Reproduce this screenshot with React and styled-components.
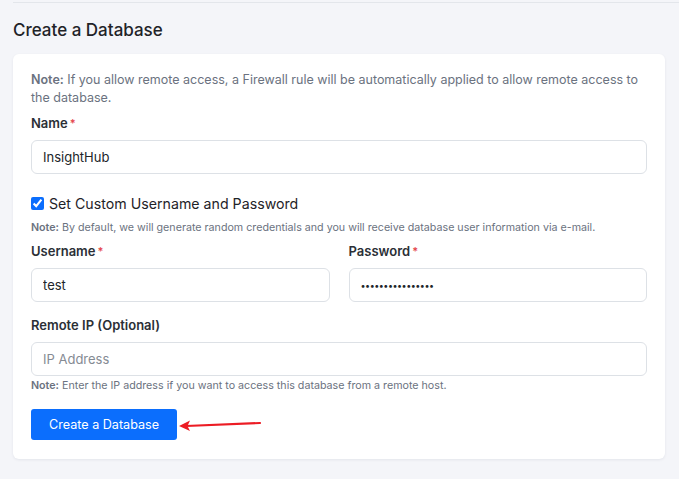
import React from 'react';
import styled, { createGlobalStyle } from 'styled-components';

const GlobalStyle = createGlobalStyle`
  html, body {
    margin: 0;
    padding: 0;
    background: #f4f5f9;
    font-family: Inter, "Noto Sans", sans-serif;
    color: #212529;
  }
`;

const Page = styled.div`
  padding-left: 13px;
  padding-top: 2px;
  min-height: 477px;
`;

const Rule = styled.div`
  height: 1px;
  background: #e3e6eb;
`;

const Content = styled.div`
  padding-right: 14px;
`;

const Title = styled.h2`
  margin: 15px 0 12px;
  font-size: 17px;
  line-height: 24px;
  font-weight: 500;
  color: #1f2328;
`;

const Card = styled.div`
  background: #fff;
  border-radius: 6px;
  box-shadow: 0 1px 3px rgba(20, 30, 60, 0.07);
  padding: 17px 18px 19px;
`;

const Note = styled.p`
  margin: 0 0 ${({ $mb }) => $mb || 0}px;
  font-size: ${({ $small }) => ($small ? '10.7px' : '12.5px')};
  line-height: ${({ $small }) => ($small ? '16px' : '18px')};
  color: #6b7280;

  b {
    font-weight: 600;
    color: #6b7280;
  }
`;

const Label = styled.label`
  display: block;
  margin-bottom: 8px;
  font-size: 13px;
  line-height: 18px;
  font-weight: 600;
  color: #2b2f36;
`;

const Req = styled.span`
  color: #e5484d;
  margin-left: 2px;
  font-size: 11px;
  vertical-align: top;
`;

const Field = styled.div`
  margin-bottom: ${({ $mb }) => $mb || 0}px;
`;

const Input = styled.input`
  box-sizing: border-box;
  width: 100%;
  height: 34px;
  padding: 0 11px;
  border: 1px solid #dde1e6;
  border-radius: 6px;
  background: #fff;
  font-family: inherit;
  font-size: 13px;
  color: #212529;
  outline: none;

  &[type='password'] {
    font-size: 9px;
    letter-spacing: -0.5px;
  }

  &::placeholder {
    color: #858b93;
  }
`;

const Row = styled.div`
  display: grid;
  grid-template-columns: 1fr 1fr;
  column-gap: 19px;
  margin-bottom: 14px;
`;

const CheckRow = styled.label`
  display: flex;
  align-items: center;
  gap: 5px;
  height: 20px;
  margin-bottom: 7px;
  font-size: 14.2px;
  color: #1f2328;

  input {
    width: 13px;
    height: 13px;
    margin: 0;
    accent-color: #0b6efd;
  }
`;

const Actions = styled.div`
  display: flex;
  align-items: center;
`;

const Button = styled.button`
  height: 31px;
  padding: 0 18px;
  border: none;
  border-radius: 3px;
  background: #0b6efd;
  color: #fff;
  font-family: inherit;
  font-size: 12.6px;
  cursor: pointer;
`;

const Arrow = () => (
  <svg width="84" height="14" viewBox="0 0 84 14" style={{ marginLeft: 1 }}>
    <line x1="8" y1="8" x2="82" y2="5" stroke="#ec1c24" strokeWidth="2.2" strokeLinecap="round" />
    <path d="M1 8 L12 2.5 L9.5 8 L12 13 Z" fill="#ec1c24" />
  </svg>
);

export default function App() {
  return (
    <Page>
      <GlobalStyle />
      <Rule />
      <Content>
        <Title>Create a Database</Title>
        <Card>
          <Note $mb={7}>
            <b>Note:</b> If you allow remote access, a Firewall rule will be automatically applied to allow remote access to the database.
          </Note>
          <Field $mb={19}>
            <Label>Name<Req>*</Req></Label>
            <Input defaultValue="InsightHub" />
          </Field>
          <CheckRow>
            <input type="checkbox" defaultChecked />
            Set Custom Username and Password
          </CheckRow>
          <Note $small $mb={6}>
            <b>Note:</b> By default, we will generate random credentials and you will receive database user information via e-mail.
          </Note>
          <Row>
            <Field>
              <Label>Username<Req>*</Req></Label>
              <Input defaultValue="test" />
            </Field>
            <Field>
              <Label>Password<Req>*</Req></Label>
              <Input type="password" defaultValue="abcdefghijklmnop" />
            </Field>
          </Row>
          <Field $mb={2}>
            <Label>Remote IP (Optional)</Label>
            <Input placeholder="IP Address" />
          </Field>
          <Note $small $mb={15}>
            <b>Note:</b> Enter the IP address if you want to access this database from a remote host.
          </Note>
          <Actions>
            <Button>Create a Database</Button>
            <Arrow />
          </Actions>
        </Card>
      </Content>
    </Page>
  );
}
